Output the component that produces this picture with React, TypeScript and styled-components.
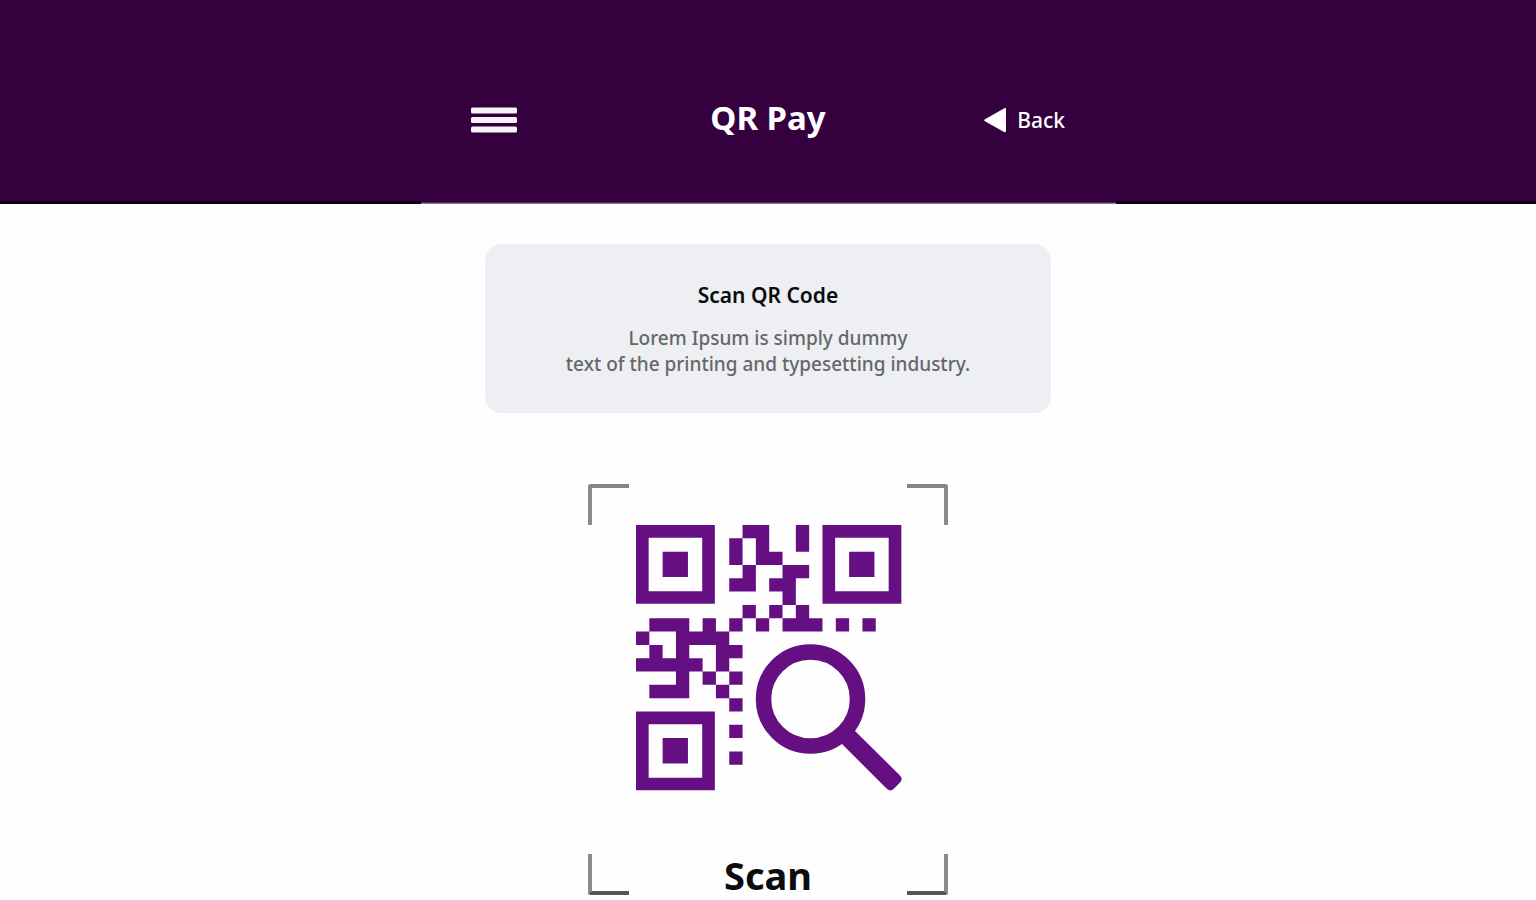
import React from "react";
import styled, { createGlobalStyle } from "styled-components";

const GlobalStyle = createGlobalStyle`
  *, *::before, *::after { box-sizing: border-box; }
  body {
    margin: 0;
    background: #fefefe;
    color: #0c0c0c;
    font-family: "Noto Sans", "Open Sans", sans-serif;
  }
  button { font-family: inherit; }
`;

const Header = styled.header`
  background: #34003e;
  color: #fff;
`;

const Toolbar = styled.div`
  display: grid;
  grid-template-columns: 1fr auto 1fr;
  align-items: center;
  max-width: 594px;
  margin: 0 auto;
  padding: 92px 0 53px;
`;

const Title = styled.h1`
  margin: 0;
  padding-bottom: 4px;
  font-size: 33px;
  line-height: 52px;
  font-weight: 700;
`;

const MenuButton = styled.button`
  justify-self: start;
  display: flex;
  padding: 0;
  border: 0;
  background: none;
  cursor: pointer;
`;

const BackLink = styled.a`
  justify-self: end;
  display: flex;
  align-items: center;
  gap: 11px;
  color: #fff;
  font-size: 21px;
  line-height: 28px;
  font-weight: 500;
  text-decoration: none;
`;

const Divider = styled.div`
  display: grid;
  grid-template-columns: 1fr minmax(0, 695px) 1fr;
  height: 3px;
  background: #050008;
`;

const DividerHighlight = styled.div`
  grid-column: 2;
  background: linear-gradient(#34003e 33%, #6b4678 66%, #b9a9c0);
`;

const Main = styled.main`
  display: flex;
  flex-direction: column;
  align-items: center;
  padding: 40px 16px 4px;
`;

const InfoCard = styled.section`
  width: 100%;
  max-width: 566px;
  padding: 35px 24px 36px;
  border-radius: 16px;
  background: #edeff3;
  text-align: center;
`;

const CardTitle = styled.h2`
  margin: 0 0 14px;
  font-size: 21px;
  line-height: 32px;
  font-weight: 600;
`;

const CardText = styled.p`
  margin: 0;
  color: #666769;
  font-size: 19px;
  line-height: 26px;
  font-weight: 500;
`;

const ScanFrame = styled.section`
  display: flex;
  flex-direction: column;
  width: 100%;
  max-width: 360px;
  margin-top: 71px;
`;

const FrameRow = styled.div`
  display: flex;
  align-items: center;
  justify-content: space-between;
  height: 41px;
`;

const Corner = styled.span<{ $vertical: "top" | "bottom"; $side: "left" | "right" }>`
  width: 41px;
  height: 41px;
  border: 0 solid #8a8a8a;
  border-${(p) => p.$vertical}-width: 4px;
  border-${(p) => p.$side}-width: 4px;
  border-${(p) => p.$vertical}-color: ${(p) => (p.$vertical === "bottom" ? "#555" : "#858585")};
  border-${(p) => p.$vertical}-${(p) => p.$side}-radius: 3px;
`;

const CodeArt = styled.svg`
  align-self: center;
  width: 268px;
  height: 268px;
  margin-bottom: 61px;
`;

const ScanButton = styled.button`
  padding: 2px 0 0;
  border: 0;
  background: none;
  color: #0c0c0c;
  font-size: 38px;
  line-height: 41px;
  font-weight: 700;
  cursor: pointer;
`;

const PURPLE = "#660f83";

const MODULES = [
  "........##..#.......",
  ".......#.#..#.......",
  ".......#.##.........",
  "........#..##.......",
  ".......##.##........",
  "...........#........",
  "........#.#.#.......",
  ".###.#.#.#.###.#.#..",
  "#..####.............",
  ".#.#..##............",
  "#####.#.............",
  "...#.#.#............",
  ".###..#.............",
  ".......#............",
  "....................",
  ".......#............",
  "....................",
  ".......#............",
];

const FINDERS = [
  [0, 0],
  [14, 0],
  [0, 14],
];

function modulePath() {
  const parts: string[] = [];
  MODULES.forEach((row, y) => {
    for (const match of row.matchAll(/#+/g)) {
      const n = match[0].length;
      parts.push(`M${match.index} ${y}h${n}v1h-${n}z`);
    }
  });
  return parts.join("");
}

function QrSearch() {
  return (
    <CodeArt viewBox="-1 0 268 268" role="img" aria-label="QR code with a magnifying glass">
      <g transform="translate(1 0) scale(13.32)" fill={PURPLE}>
        <path d={modulePath()} />
        {FINDERS.map(([x, y]) => (
          <path
            key={`${x}-${y}`}
            fillRule="evenodd"
            transform={`translate(${x} ${y})`}
            d="M0 0H5.92V5.92H0zM.95 .95V4.97H4.97V.95zM2 2H3.9V3.9H2z"
          />
        ))}
      </g>
      <circle cx="175.5" cy="174" r="47" fill="none" stroke={PURPLE} strokeWidth="15.5" />
      <path
        fill={PURPLE}
        d="M206 218L251 263Q255 267.500 259 263.500L265 257.500Q268.500 253.500 264.500 250L219 205z"
      />
    </CodeArt>
  );
}

export default function App() {
  return (
    <>
      <GlobalStyle />
      <Header>
        <Toolbar>
          <MenuButton type="button" aria-label="Open menu">
            <svg width="46" height="26" viewBox="0 0 46 26" fill="#f7f4f8" aria-hidden="true">
              <rect y="0.500" width="46" height="6" rx="1.500" />
              <rect y="10" width="46" height="6" rx="1.500" />
              <rect y="19.500" width="46" height="6" rx="1.500" />
            </svg>
          </MenuButton>
          <Title>QR Pay</Title>
          <BackLink href="#">
            <svg width="22" height="26" viewBox="0 0 22 26" fill="#fff" aria-hidden="true">
              <path d="M0.500 12.500Q0 13 0.500 14L20 25Q22 25.500 22 24V2Q22 0.500 20 1.500z" />
            </svg>
            Back
          </BackLink>
        </Toolbar>
        <Divider>
          <DividerHighlight />
        </Divider>
      </Header>
      <Main>
        <InfoCard>
          <CardTitle>Scan QR Code</CardTitle>
          <CardText>
            Lorem Ipsum is simply dummy
            <br />
            text of the printing and typesetting industry.
          </CardText>
        </InfoCard>
        <ScanFrame aria-label="Scanner">
          <FrameRow>
            <Corner $vertical="top" $side="left" />
            <Corner $vertical="top" $side="right" />
          </FrameRow>
          <QrSearch />
          <FrameRow>
            <Corner $vertical="bottom" $side="left" />
            <ScanButton type="button">Scan</ScanButton>
            <Corner $vertical="bottom" $side="right" />
          </FrameRow>
        </ScanFrame>
      </Main>
    </>
  );
}
